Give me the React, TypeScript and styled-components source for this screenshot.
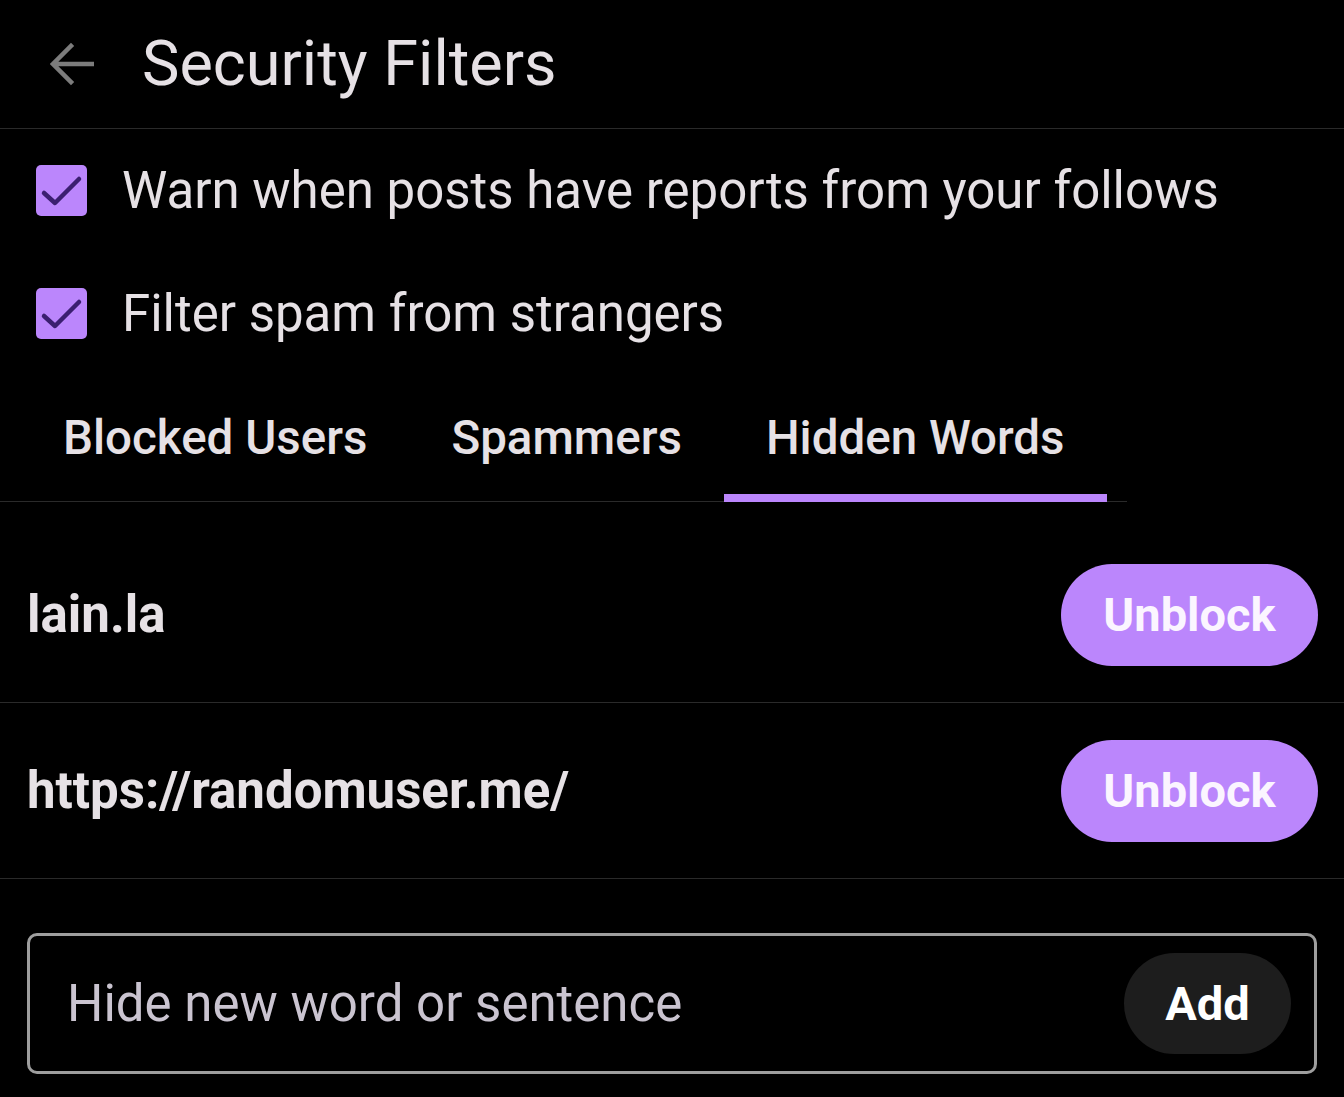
import React from "react";
import styled, { createGlobalStyle } from "styled-components";

const GlobalStyle = createGlobalStyle`
  html, body {
    margin: 0;
    padding: 0;
    background: #000;
  }
  body {
    font-family: Roboto, "Noto Sans", "Liberation Sans", sans-serif;
    color: #e6e1e5;
  }
  * { box-sizing: border-box; }
`;

const Page = styled.div`
  width: 1344px;
  min-height: 1097px;
  background: #000;
  display: flex;
  flex-direction: column;
`;

const Header = styled.header`
  height: 129px;
  display: flex;
  align-items: center;
  padding-left: 50px;
  border-bottom: 1px solid #2a2a2a;
  gap: 48px;
`;

const BackButton = styled.button`
  width: 44px;
  height: 44px;
  padding: 0;
  border: none;
  background: transparent;
  display: flex;
  align-items: center;
  justify-content: center;
`;

const Title = styled.h1`
  margin: 0;
  font-size: 63px;
  font-weight: 400;
  color: #e6e1e5;
  line-height: 1;
  padding-bottom: 2px;
`;

const CheckList = styled.div`
  display: flex;
  flex-direction: column;
`;

const CheckRow = styled.label`
  height: 123px;
  display: flex;
  align-items: center;
  gap: 35px;
  padding-left: 36px;
`;

const CheckBox = styled.span`
  width: 51px;
  height: 51px;
  border-radius: 5px;
  background: #bb86fc;
  display: flex;
  align-items: center;
  justify-content: center;
  flex-shrink: 0;
`;

const CheckText = styled.span`
  font-size: 51px;
  font-weight: 400;
  color: #e6e1e5;
`;

const TabBar = styled.div`
  align-self: flex-start;
  display: flex;
  padding: 0 20px 0 21px;
  border-bottom: 1px solid #2a2a2a;
`;

const Tab = styled.div<{ $active?: boolean }>`
  position: relative;
  height: 126px;
  padding: 0 42px;
  display: flex;
  align-items: center;
  font-size: 47.5px;
  font-weight: 500;
  color: #e6e1e5;
`;

const Indicator = styled.span`
  position: absolute;
  left: 0;
  right: 0;
  bottom: -1px;
  height: 8px;
  background: #bb86fc;
`;

const List = styled.div`
  padding-top: 25px;
  display: flex;
  flex-direction: column;
`;

const Row = styled.div`
  height: 176px;
  display: flex;
  align-items: center;
  justify-content: space-between;
  padding: 0 26px 0 27px;
  border-bottom: 1px solid #2a2a2a;
`;

const Word = styled.span`
  font-size: 51px;
  font-weight: 700;
  color: #e6e1e5;
`;

const UnblockButton = styled.button`
  width: 257px;
  height: 102px;
  border: none;
  border-radius: 51px;
  background: #bb86fc;
  color: #fbf5ff;
  font-family: Roboto, "Liberation Sans", sans-serif;
  font-size: 47px;
  font-weight: 700;
  padding: 0;
`;

const InputBox = styled.div`
  margin: 54px 27px 0 27px;
  height: 141px;
  border: 3px solid #9e9e9e;
  border-radius: 10px;
  display: flex;
  align-items: center;
  padding: 0 23px 0 37px;
`;

const WordInput = styled.input`
  flex: 1;
  min-width: 0;
  background: transparent;
  border: none;
  outline: none;
  font-family: Roboto, "Noto Sans", sans-serif;
  font-size: 51px;
  color: #e6e1e5;
  padding: 0;
  &::placeholder {
    color: #cac4d0;
    opacity: 1;
  }
`;

const AddButton = styled.button`
  width: 167px;
  height: 101px;
  border: none;
  border-radius: 51px;
  background: #1d1d1d;
  color: #ffffff;
  font-family: Roboto, "Liberation Sans", sans-serif;
  font-size: 47px;
  font-weight: 700;
  padding: 0;
  flex-shrink: 0;
`;

const BackArrow = () => (
  <svg width="44" height="44" viewBox="0 0 44 44" fill="none">
    <path
      d="M42 22H4M21 4L3 22L21 40"
      stroke="#7c7c7c"
      strokeWidth="4.5"
      strokeLinecap="square"
      strokeLinejoin="miter"
    />
  </svg>
);

const CheckMark = () => (
  <svg width="51" height="51" viewBox="0 0 51 51" fill="none">
    <path
      d="M8 28L19 38L43 14"
      stroke="#3b1f70"
      strokeWidth="4.5"
      strokeLinecap="round"
      strokeLinejoin="round"
    />
  </svg>
);

const filters = [
  "Warn when posts have reports from your follows",
  "Filter spam from strangers",
];

const tabs = ["Blocked Users", "Spammers", "Hidden Words"];

const words = ["lain.la", "https://randomuser.me/"];

export default function App() {
  return (
    <Page>
      <GlobalStyle />
      <Header>
        <BackButton aria-label="Back">
          <BackArrow />
        </BackButton>
        <Title>Security Filters</Title>
      </Header>
      <CheckList>
        {filters.map((f) => (
          <CheckRow key={f}>
            <CheckBox>
              <CheckMark />
            </CheckBox>
            <CheckText>{f}</CheckText>
          </CheckRow>
        ))}
      </CheckList>
      <TabBar>
        {tabs.map((t, i) => (
          <Tab key={t} $active={i === 2}>
            {t}
            {i === 2 && <Indicator />}
          </Tab>
        ))}
      </TabBar>
      <List>
        {words.map((w) => (
          <Row key={w}>
            <Word>{w}</Word>
            <UnblockButton>Unblock</UnblockButton>
          </Row>
        ))}
      </List>
      <InputBox>
        <WordInput placeholder="Hide new word or sentence" />
        <AddButton>Add</AddButton>
      </InputBox>
    </Page>
  );
}
